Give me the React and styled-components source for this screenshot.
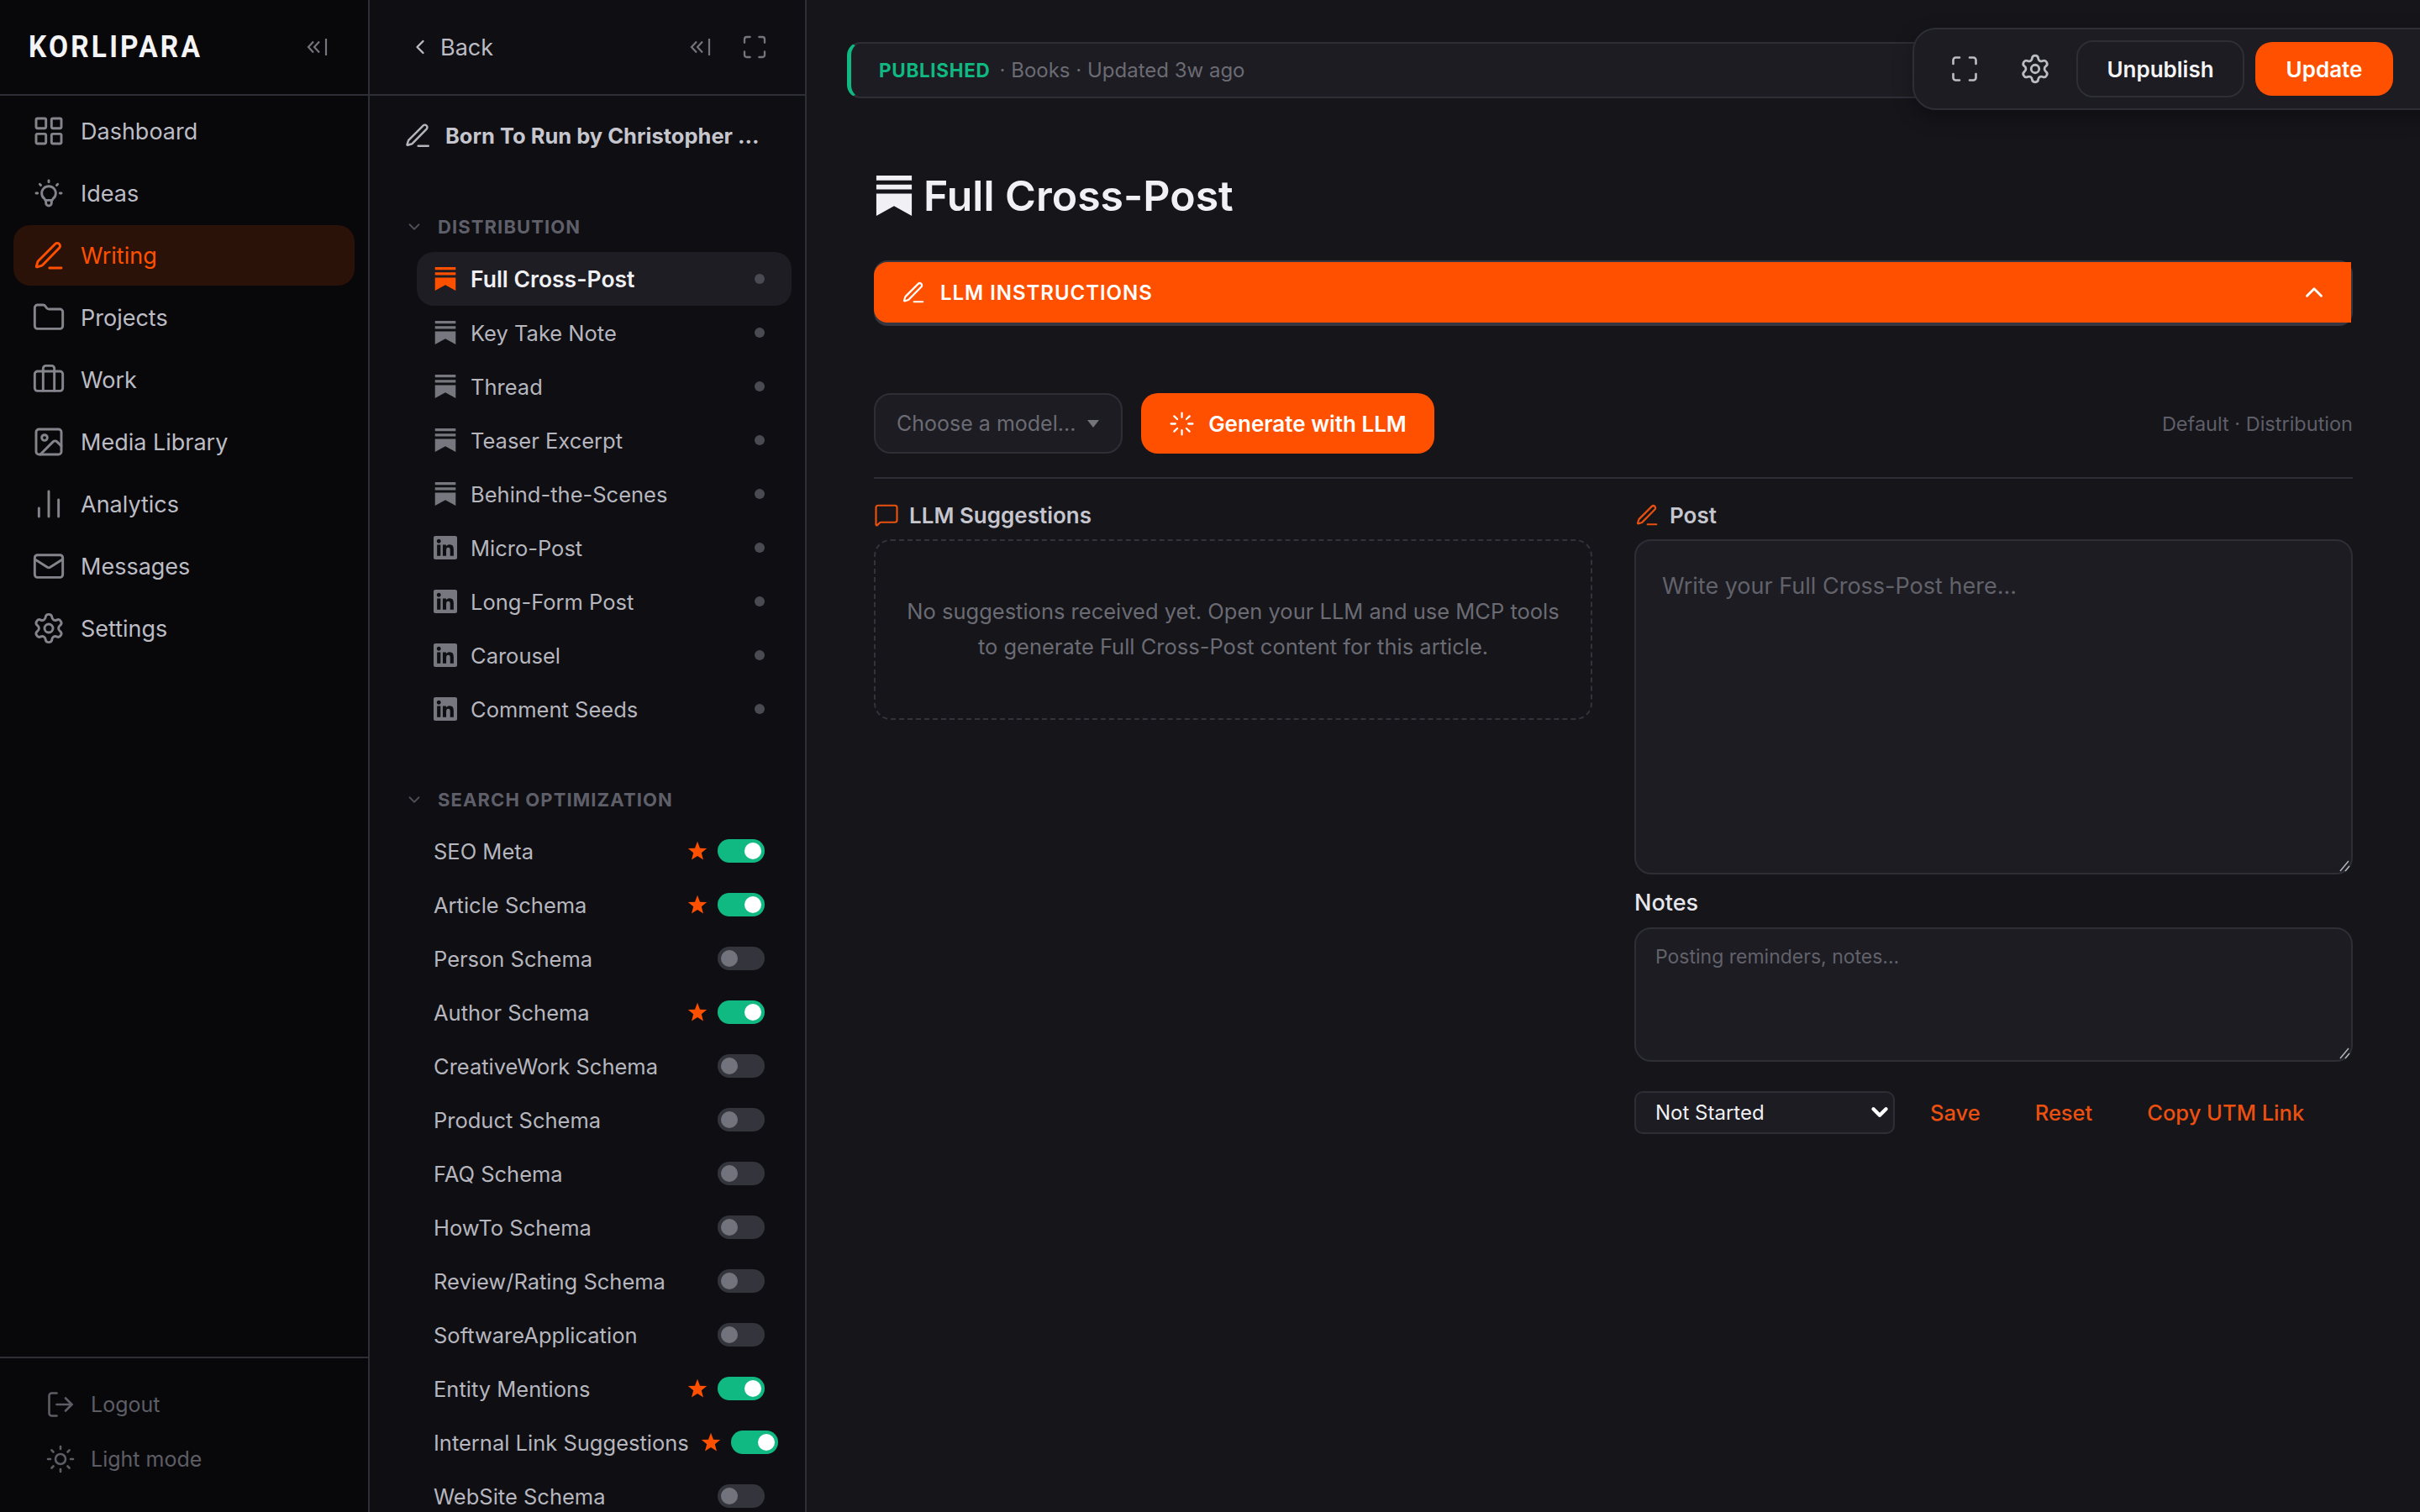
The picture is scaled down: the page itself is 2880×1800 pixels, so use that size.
import React from "react";
import styled, { createGlobalStyle } from "styled-components";
import {
  LayoutGrid, Folder, Briefcase, Image, ChartNoAxesColumn, Mail, Settings,
  LogOut, Sun, ChevronLeft, ChevronDown, ChevronUp, Maximize, Loader, MessageSquare,
} from "lucide-react";
import { TbBulb } from "react-icons/tb";
import { SiSubstack, SiLinkedin } from "react-icons/si";

const orange = "#ff5000";
const line = "#2e2e37";
const panel = "#1c1c22";

const GlobalStyle = createGlobalStyle`
  html, body {
    margin: 0;
    background: #15151a;
    color-scheme: dark;
  }
  * { box-sizing: border-box; }
  body, button, select, textarea {
    font-family: Inter, "Noto Sans", sans-serif;
  }
`;

const Shell = styled.div`
  display: grid;
  grid-template-columns: 440px 520px 1fr;
  height: 100vh;
  overflow: hidden;
`;

const NavSide = styled.aside`
  display: flex;
  flex-direction: column;
  background: #08080b;
  border-right: 2px solid ${line};
`;

const SideHead = styled.div`
  height: 114px;
  flex: none;
  display: flex;
  align-items: center;
  justify-content: space-between;
  border-bottom: 2px solid ${line};
  padding: ${(p) => p.$pad};
`;

const Logo = styled.div`
  font-family: Roboto, sans-serif;
  font-size: 36px;
  font-weight: 700;
  letter-spacing: 0.095em;
  color: #f4f4f7;
  transform: scaleX(0.93);
  transform-origin: left center;
`;

const NavList = styled.nav`
  display: flex;
  flex-direction: column;
  gap: 2px;
  padding: 6px 16px;
`;

const NavItem = styled.a`
  height: 72px;
  display: flex;
  align-items: center;
  gap: 18px;
  padding-left: 22px;
  border-radius: 20px;
  font-size: 27px;
  color: ${(p) => (p.$active ? orange : "#bcbcc4")};
  background: ${(p) => (p.$active ? "#2a1208" : "transparent")};
  svg { color: ${(p) => (p.$active ? orange : "#84848c")}; flex: none; }
`;

const NavFoot = styled.div`
  margin-top: auto;
  height: 185px;
  border-top: 2px solid ${line};
  padding: 22px 0 0 54px;
  display: flex;
  flex-direction: column;
`;

const FootItem = styled.a`
  height: 65px;
  display: flex;
  align-items: center;
  gap: 18px;
  font-size: 25px;
  color: #5d5d65;
  svg { flex: none; }
`;

const DocSide = styled.aside`
  display: flex;
  flex-direction: column;
  background: #0e0e13;
  border-right: 2px solid ${line};
  overflow: hidden;
`;

const BackLink = styled.a`
  display: flex;
  align-items: center;
  gap: 10px;
  font-size: 27px;
  color: #bcbcc4;
`;

const HeadTools = styled.div`
  display: flex;
  align-items: center;
  gap: 36px;
  color: #74747c;
`;

const DocTitle = styled.div`
  flex: none;
  display: flex;
  align-items: center;
  gap: 16px;
  padding-left: 40px;
  height: 94px;
  font-size: 25.5px;
  font-weight: 700;
  white-space: nowrap;
  color: #c6c6ce;
  svg { flex: none; color: #b4b4bc; }
`;

const GroupHead = styled.div`
  flex: none;
  display: flex;
  align-items: center;
  gap: 17px;
  height: 36px;
  padding-left: 42px;
  margin-top: ${(p) => p.$top}px;
  margin-bottom: ${(p) => p.$bottom}px;
  font-size: 22px;
  font-weight: 700;
  letter-spacing: 0.05em;
  color: #5f5f69;
  svg { flex: none; color: #4e4e57; }
`;

const DistRow = styled.div`
  flex: none;
  height: 64px;
  margin: 0 16px 0 56px;
  padding: 0 32px 0 20px;
  display: flex;
  align-items: center;
  border-radius: 20px;
  font-size: ${(p) => (p.$active ? 26.5 : 25.5)}px;
  font-weight: ${(p) => (p.$active ? 600 : 400)};
  color: ${(p) => (p.$active ? "#f0f0f4" : "#b6b6be")};
  background: ${(p) => (p.$active ? "#1d1d23" : "transparent")};
`;

const DistIcon = styled.span`
  width: 28px;
  margin-right: 16px;
  display: flex;
  justify-content: center;
  color: ${(p) => (p.$active ? orange : "#77777f")};
`;

const Dot = styled.span`
  width: 12px;
  height: 12px;
  margin-left: auto;
  border-radius: 50%;
  background: #4a4a53;
`;

const SeoRow = styled.div`
  height: 64px;
  flex: none;
  padding-left: 76px;
  width: 470px;
  display: flex;
  align-items: center;
  gap: 14px;
  font-size: 25.5px;
  color: #b6b6be;
`;

const SeoLabel = styled.span`
  flex: 1;
  white-space: nowrap;
`;

const SeoTools = styled.span`
  display: flex;
  align-items: center;
  gap: 12px;
  flex: none;
`;

const Toggle = styled.span`
  width: 56px;
  height: 28px;
  border-radius: 14px;
  padding: 4px;
  display: flex;
  justify-content: ${(p) => (p.$on ? "flex-end" : "flex-start")};
  background: ${(p) => (p.$on ? "#10b981" : "#34343d")};
  &::after {
    content: "";
    width: 20px;
    height: 20px;
    border-radius: 50%;
    background: ${(p) => (p.$on ? "#ffffff" : "#73737d")};
  }
`;

const Main = styled.main`
  position: relative;
  overflow: hidden;
  background: #15151a;
  padding: 50px 80px 0;
`;

const StatusBar = styled.div`
  height: 67px;
  margin-left: -32px;
  padding-left: 33px;
  display: flex;
  align-items: center;
  gap: 11px;
  background: ${panel};
  border: 2px solid ${line};
  border-left: 5px solid #10b981;
  border-radius: 16px;
  font-size: 24px;
  color: #6b6b74;
`;

const StatusTag = styled.b`
  font-size: 22.5px;
  font-weight: 700;
  letter-spacing: 0.03em;
  color: #10b981;
`;

const FloatBar = styled.div`
  position: absolute;
  top: 33px;
  right: -32px;
  height: 98px;
  padding: 0 62px 0 18px;
  display: flex;
  align-items: center;
  background: ${panel};
  border: 2px solid ${line};
  border-radius: 28px;
  box-shadow: 0 8px 24px rgba(0, 0, 0, 0.3);
`;

const IconBtn = styled.button`
  width: 84px;
  height: 64px;
  display: flex;
  align-items: center;
  justify-content: center;
  border: 0;
  background: none;
  color: #bcbcc4;
`;

const GhostBtn = styled.button`
  width: 200px;
  height: 68px;
  margin: 0 13px 0 7px;
  border: 2px solid ${line};
  border-radius: 20px;
  background: none;
  font-size: 26px;
  font-weight: 600;
  color: #f4f4f7;
`;

const PrimaryBtn = styled.button`
  height: ${(p) => p.$h}px;
  width: ${(p) => p.$w}px;
  display: flex;
  align-items: center;
  justify-content: center;
  gap: 16px;
  border: 0;
  border-radius: 20px;
  background: ${orange};
  font-size: 26px;
  font-weight: 600;
  color: #ffffff;
`;

const PageTitle = styled.h1`
  display: flex;
  align-items: center;
  gap: 11px;
  height: 60px;
  margin: 86px 0 47px;
  font-size: 50px;
  font-weight: 600;
  color: #f0f0f5;
`;

const LlmFrame = styled.div`
  padding: 2px 2px 4px 0;
  border-radius: 16px;
  background: #363640;
`;

const LlmBar = styled.div`
  height: 72px;
  padding: 0 27px 0 32px;
  display: flex;
  align-items: center;
  gap: 17px;
  border-radius: 16px 0 0 16px;
  background: ${orange};
  font-size: 24px;
  font-weight: 600;
  letter-spacing: 0.04em;
  color: #ffffff;
  svg:last-child { margin-left: auto; }
`;

const ModelRow = styled.div`
  display: flex;
  align-items: center;
  gap: 22px;
  margin-top: 80px;
  padding-bottom: 28px;
  border-bottom: 2px solid ${line};
`;

const ModelPick = styled.div`
  width: 296px;
  height: 72px;
  padding: 0 26px 0 25px;
  display: flex;
  align-items: center;
  justify-content: space-between;
  background: ${panel};
  border: 2px solid ${line};
  border-radius: 20px;
  font-size: 25px;
  color: #6b6b74;
  &::after {
    content: "";
    border: 7px solid transparent;
    border-top: 9px solid #74747c;
    border-bottom: 0;
  }
`;

const ModelNote = styled.span`
  margin-left: auto;
  font-size: 23.5px;
  color: #5f5f69;
`;

const Columns = styled.div`
  display: grid;
  grid-template-columns: 1fr 1fr;
  gap: 50px;
  margin-top: 28px;
`;

const Column = styled.section`
  display: flex;
  flex-direction: column;
`;

const PaneLabel = styled.div`
  height: 30px;
  margin-bottom: 14px;
  display: flex;
  align-items: center;
  gap: 12px;
  font-size: 26px;
  font-weight: 600;
  color: #c6c6ce;
  svg { color: #e8500f; flex: none; }
`;

const EmptyBox = styled.div`
  height: 215px;
  display: flex;
  align-items: center;
  justify-content: center;
  text-align: center;
  padding: 0 32px 2px;
  border: 2px dashed #33333c;
  border-radius: 20px;
  font-size: 25.5px;
  line-height: 42px;
  color: #6b6b74;
`;

const AreaWrap = styled.div`
  position: relative;
  height: ${(p) => p.$h}px;
  svg {
    position: absolute;
    right: 3px;
    bottom: 3px;
    color: #b4b4bc;
    pointer-events: none;
  }
`;

const Area = styled.textarea`
  display: block;
  width: 100%;
  height: 100%;
  padding: ${(p) => p.$pad};
  background: ${panel};
  border: 2px solid ${line};
  border-radius: 20px;
  outline: none;
  resize: none;
  font-size: ${(p) => p.$size}px;
  line-height: 1.5;
  color: #e8e8ee;
  &::placeholder { color: #62626b; opacity: 1; }
`;

const NotesLabel = styled.div`
  height: 30px;
  margin: 18px 0 15px;
  display: flex;
  align-items: center;
  font-size: 27px;
  font-weight: 500;
  color: #e6e6ec;
`;

const NotesFoot = styled.div`
  display: flex;
  align-items: center;
  margin-top: 35px;
`;

const StatusPick = styled.div`
  position: relative;
  width: 310px;
  height: 51px;
  flex: none;
  margin-right: 22px;
  svg {
    position: absolute;
    top: 10px;
    right: 3px;
    color: #ffffff;
    pointer-events: none;
  }
`;

const StatusSelect = styled.select`
  appearance: none;
  width: 100%;
  height: 100%;
  padding: 0 23px;
  background: ${panel};
  border: 2px solid ${line};
  border-radius: 10px;
  font-size: 24px;
  color: #f0f0f4;
`;

const TextBtn = styled.button`
  padding: 0 20px;
  margin-right: 25px;
  border: 0;
  background: none;
  white-space: nowrap;
  font-size: 25.5px;
  font-weight: 500;
  color: #ec5010;
`;

function CollapseMark() {
  return (
    <svg width="26" height="22" viewBox="0 0 26 22" fill="none" stroke="currentColor" strokeWidth="2.2">
      <path d="M9 4.5 3 11l6 6.5M16 4.5 10 11l6 6.5" />
      <path d="M24 1v20" />
    </svg>
  );
}

function PenMark({ size = 40 }) {
  return (
    <svg width={size} height={size} viewBox="0 0 24 24" fill="none" stroke="currentColor" strokeWidth="1.75" strokeLinecap="round" strokeLinejoin="round">
      <path d="M12.5 21H21" />
      <path d="M16.6 3.9a2 2 0 0 1 2.9 2.9L7.6 18.9a2 2 0 0 1-.9.5l-3 .9a.4.4 0 0 1-.5-.5l.9-3a2 2 0 0 1 .5-.9z" />
    </svg>
  );
}

function StarMark() {
  return (
    <svg width="24" height="24" viewBox="0 0 24 24" fill={orange}>
      <path d="M12 .8l3 7.9 8.2.4-6.4 5.2 2.2 8.2L12 17.9l-7 4.6 2.2-8.2L.8 9.1l8.2-.4z" />
    </svg>
  );
}

function GripMark() {
  return (
    <svg width="14" height="14" viewBox="0 0 14 14" fill="none" stroke="currentColor" strokeWidth="1.5">
      <path d="M2 13 12 1M8 13l5-6" />
    </svg>
  );
}

const navItems = [
  { label: "Dashboard", icon: <LayoutGrid size={40} strokeWidth={1.75} /> },
  { label: "Ideas", icon: <TbBulb size={40} strokeWidth={1.75} /> },
  { label: "Writing", icon: <PenMark />, active: true },
  { label: "Projects", icon: <Folder size={40} strokeWidth={1.75} /> },
  { label: "Work", icon: <Briefcase size={40} strokeWidth={1.75} /> },
  { label: "Media Library", icon: <Image size={40} strokeWidth={1.75} /> },
  { label: "Analytics", icon: <ChartNoAxesColumn size={40} strokeWidth={1.75} /> },
  { label: "Messages", icon: <Mail size={40} strokeWidth={1.75} /> },
  { label: "Settings", icon: <Settings size={40} strokeWidth={1.75} /> },
];

const distItems = [
  { label: "Full Cross-Post", kind: "sub", active: true },
  { label: "Key Take Note", kind: "sub" },
  { label: "Thread", kind: "sub" },
  { label: "Teaser Excerpt", kind: "sub" },
  { label: "Behind-the-Scenes", kind: "sub" },
  { label: "Micro-Post", kind: "in" },
  { label: "Long-Form Post", kind: "in" },
  { label: "Carousel", kind: "in" },
  { label: "Comment Seeds", kind: "in" },
];

const seoItems = [
  { label: "SEO Meta", on: true },
  { label: "Article Schema", on: true },
  { label: "Person Schema" },
  { label: "Author Schema", on: true },
  { label: "CreativeWork Schema" },
  { label: "Product Schema" },
  { label: "FAQ Schema" },
  { label: "HowTo Schema" },
  { label: "Review/Rating Schema" },
  { label: "SoftwareApplication" },
  { label: "Entity Mentions", on: true },
  { label: "Internal Link Suggestions", on: true },
  { label: "WebSite Schema" },
];

export default function App() {
  return (
    <Shell>
      <GlobalStyle />
      <NavSide>
        <SideHead $pad="0 48px 0 34px">
          <Logo>KORLIPARA</Logo>
          <HeadTools><CollapseMark /></HeadTools>
        </SideHead>
        <NavList>
          {navItems.map((item) => (
            <NavItem key={item.label} $active={item.active}>
              {item.icon}
              {item.label}
            </NavItem>
          ))}
        </NavList>
        <NavFoot>
          <FootItem><LogOut size={36} strokeWidth={1.75} />Logout</FootItem>
          <FootItem><Sun size={36} strokeWidth={1.75} />Light mode</FootItem>
        </NavFoot>
      </NavSide>

      <DocSide>
        <SideHead $pad="0 44px 0 46px">
          <BackLink><ChevronLeft size={28} strokeWidth={2} />Back</BackLink>
          <HeadTools>
            <CollapseMark />
            <Maximize size={32} strokeWidth={1.75} />
          </HeadTools>
        </SideHead>
        <DocTitle>
          <PenMark size={34} />
          Born To Run by Christopher ...
        </DocTitle>
        <GroupHead $top={44} $bottom={12}>
          <ChevronDown size={22} strokeWidth={2} />
          DISTRIBUTION
        </GroupHead>
        {distItems.map((item) => (
          <DistRow key={item.label} $active={item.active}>
            <DistIcon $active={item.active}>
              {item.kind === "sub" ? <SiSubstack size={28} /> : <SiLinkedin size={28} />}
            </DistIcon>
            {item.label}
            <Dot />
          </DistRow>
        ))}
        <GroupHead $top={58} $bottom={11}>
          <ChevronDown size={22} strokeWidth={2} />
          SEARCH OPTIMIZATION
        </GroupHead>
        {seoItems.map((item) => (
          <SeoRow key={item.label}>
            <SeoLabel>{item.label}</SeoLabel>
            <SeoTools>
              {item.on && <StarMark />}
              <Toggle $on={item.on} />
            </SeoTools>
          </SeoRow>
        ))}
      </DocSide>

      <Main>
        <StatusBar>
          <StatusTag>PUBLISHED</StatusTag>
          <span>· Books · Updated 3w ago</span>
        </StatusBar>
        <FloatBar>
          <IconBtn><Maximize size={36} strokeWidth={1.75} /></IconBtn>
          <IconBtn><Settings size={38} strokeWidth={1.75} /></IconBtn>
          <GhostBtn>Unpublish</GhostBtn>
          <PrimaryBtn $w={164} $h={64}>Update</PrimaryBtn>
        </FloatBar>

        <PageTitle>
          <SiSubstack size={48} />
          Full Cross-Post
        </PageTitle>

        <LlmFrame>
          <LlmBar>
            <PenMark size={30} />
            LLM INSTRUCTIONS
            <ChevronUp size={34} strokeWidth={2} />
          </LlmBar>
        </LlmFrame>

        <ModelRow>
          <ModelPick>Choose a model...</ModelPick>
          <PrimaryBtn $w={349} $h={72}>
            <Loader size={31} strokeWidth={1.75} />
            Generate with LLM
          </PrimaryBtn>
          <ModelNote>Default · Distribution</ModelNote>
        </ModelRow>

        <Columns>
          <Column>
            <PaneLabel>
              <MessageSquare size={30} strokeWidth={1.75} />
              LLM Suggestions
            </PaneLabel>
            <EmptyBox>
              No suggestions received yet. Open your LLM and use MCP tools to generate Full Cross-Post content for this article.
            </EmptyBox>
          </Column>
          <Column>
            <PaneLabel>
              <PenMark size={30} />
              Post
            </PaneLabel>
            <AreaWrap $h={399}>
              <Area $size={27} $pad="34px 31px" placeholder="Write your Full Cross-Post here..." />
              <GripMark />
            </AreaWrap>
            <NotesLabel>Notes</NotesLabel>
            <AreaWrap $h={160}>
              <Area $size={23} $pad="16px 23px" placeholder="Posting reminders, notes..." />
              <GripMark />
            </AreaWrap>
            <NotesFoot>
              <StatusPick>
                <StatusSelect defaultValue="Not Started">
                  <option>Not Started</option>
                  <option>In Progress</option>
                  <option>Posted</option>
                </StatusSelect>
                <ChevronDown size={30} strokeWidth={3.5} />
              </StatusPick>
              <TextBtn>Save</TextBtn>
              <TextBtn>Reset</TextBtn>
              <TextBtn>Copy UTM Link</TextBtn>
            </NotesFoot>
          </Column>
        </Columns>
      </Main>
    </Shell>
  );
}
